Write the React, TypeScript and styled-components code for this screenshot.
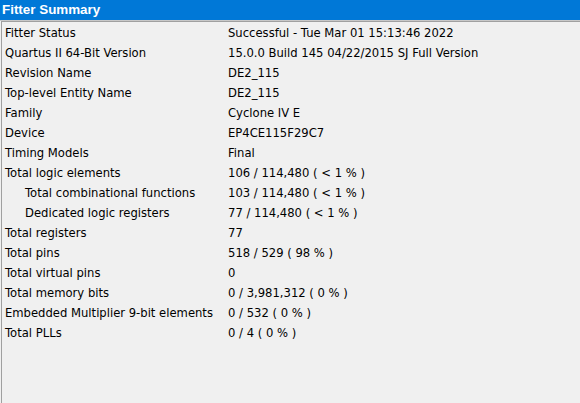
import React from "react";
import styled, { createGlobalStyle } from "styled-components";

const Global = createGlobalStyle`
  html, body { margin: 0; padding: 0; background: #f0f0f0; }
  body { font-family: Tahoma, "DejaVu Sans", "Liberation Sans", sans-serif; }
`;

const Page = styled.div`
  width: 580px;
  height: 403px;
  display: flex;
  flex-direction: column;
  background: #f0f0f0;
  overflow: hidden;
`;

const Header = styled.div`
  height: 20px;
  flex: none;
  background: #0078d7;
  color: #ffffff;
  font-family: "Liberation Sans", Arial, sans-serif;
  font-weight: bold;
  font-size: 13.4px;
  line-height: 20px;
  padding-left: 2px;
  border-bottom: 1px solid #c8c8c8;
`;

const Body = styled.div`
  flex: 1;
  margin-left: 1px;
  border-top: 1px solid #a0a0a0;
  border-left: 1px solid #a0a0a0;
  padding-top: 1px;
  background: #f0f0f0;
  display: grid;
  grid-template-columns: 226px 1fr;
  grid-auto-rows: 20px;
  align-content: start;
`;

const Label = styled.div<{ $indent?: boolean }>`
  font-family: "DejaVu Sans", sans-serif;
  font-size: 11.6px;
  color: #000;
  line-height: 20px;
  padding-left: ${(p) => (p.$indent ? 23 : 3)}px;
  white-space: nowrap;
`;

const Value = styled.div`
  font-family: "DejaVu Sans", sans-serif;
  font-size: 11.6px;
  color: #000;
  line-height: 20px;
  white-space: nowrap;
`;

const rows: [string, string, boolean?][] = [
  ["Fitter Status", "Successful - Tue Mar 01 15:13:46 2022"],
  ["Quartus II 64-Bit Version", "15.0.0 Build 145 04/22/2015 SJ Full Version"],
  ["Revision Name", "DE2_115"],
  ["Top-level Entity Name", "DE2_115"],
  ["Family", "Cyclone IV E"],
  ["Device", "EP4CE115F29C7"],
  ["Timing Models", "Final"],
  ["Total logic elements", "106 / 114,480 ( < 1 % )"],
  ["Total combinational functions", "103 / 114,480 ( < 1 % )", true],
  ["Dedicated logic registers", "77 / 114,480 ( < 1 % )", true],
  ["Total registers", "77"],
  ["Total pins", "518 / 529 ( 98 % )"],
  ["Total virtual pins", "0"],
  ["Total memory bits", "0 / 3,981,312 ( 0 % )"],
  ["Embedded Multiplier 9-bit elements", "0 / 532 ( 0 % )"],
  ["Total PLLs", "0 / 4 ( 0 % )"],
];

export default function App() {
  return (
    <Page>
      <Global />
      <Header>Fitter Summary</Header>
      <Body>
        {rows.map(([l, v, ind]) => (
          <React.Fragment key={l}>
            <Label $indent={!!ind}>{l}</Label>
            <Value>{v}</Value>
          </React.Fragment>
        ))}
      </Body>
    </Page>
  );
}
